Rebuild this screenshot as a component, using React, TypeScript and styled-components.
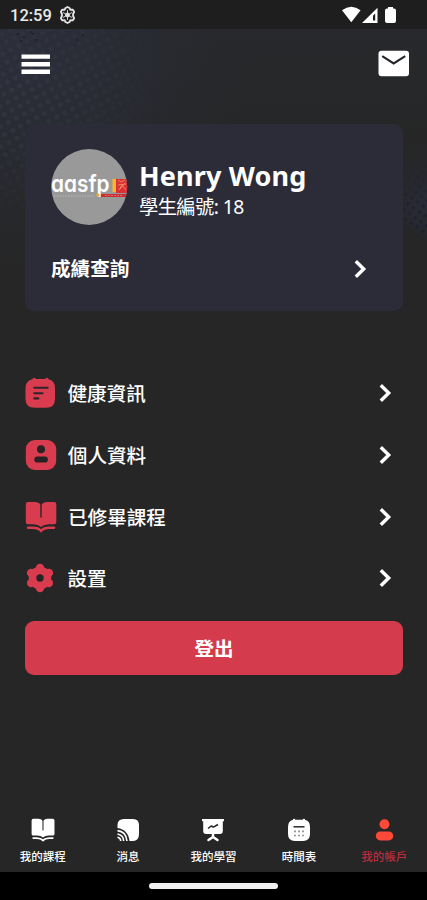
import React from "react";
import styled, { createGlobalStyle } from "styled-components";

const GlobalStyle = createGlobalStyle`
  * { box-sizing: border-box; }
  body { margin: 0; background: #262626; }
  button { border: 0; padding: 0; background: none; color: inherit; font: inherit; }
`;

const Screen = styled.div`
  width: 427px;
  height: 900px;
  display: flex;
  flex-direction: column;
  position: relative;
  isolation: isolate;
  overflow: hidden;
  background: #262626;
  color: #fff;
  font-family: "Noto Sans", "Noto Sans CJK TC", sans-serif;
`;

const Backdrop = styled.svg`
  position: absolute;
  top: 29px;
  left: 0;
  z-index: -1;
`;

const StatusBar = styled.div`
  height: 29px;
  flex: none;
  display: flex;
  align-items: center;
  padding: 0 31px 0 10px;
  background: #1e1e1e;
  font: 500 16.5px/29px Roboto, sans-serif;
  color: #e9e9e9;
`;

const Clock = styled.span`
  width: 49px;
  padding-top: 2px;
`;

const StatusIcons = styled.div`
  margin-left: auto;
  display: flex;
`;

const Header = styled.header`
  height: 95px;
  flex: none;
  display: flex;
  justify-content: space-between;
  align-items: flex-start;
  padding: 20px 17px 0 21px;
`;

const Card = styled.section`
  height: 187px;
  flex: none;
  margin: 0 24px 0 25px;
  padding: 25px 34px 0 26px;
  border-radius: 9px;
  background: #2c2c38;
`;

const Profile = styled.div`
  display: flex;
  gap: 11px;
  height: 96px;
`;

const Identity = styled.div`
  padding-top: 9px;
`;

const Name = styled.h1`
  margin: 0;
  font-size: 27px;
  line-height: 36px;
  font-weight: 700;
  letter-spacing: 0.15px;
  white-space: nowrap;
`;

const StudentNumber = styled.div`
  font-size: 19.3px;
  line-height: 26px;
  letter-spacing: -0.6px;
  white-space: nowrap;
`;

const ResultRow = styled.button`
  width: 100%;
  height: 47px;
  display: flex;
  align-items: center;
  justify-content: space-between;
  font-size: 19.6px;
  line-height: 28px;
  font-weight: 700;
`;

const Menu = styled.nav`
  display: flex;
  flex-direction: column;
  padding: 51.5px 33px 0 25px;
`;

const MenuRow = styled.button`
  height: 61.7px;
  display: flex;
  align-items: center;
  text-align: left;
  font-size: 19.6px;
  line-height: 28px;
  font-weight: 500;
`;

const MenuIcon = styled.span`
  width: 32px;
  height: 32px;
  flex: none;
  color: #d83c4e;
`;

const MenuLabel = styled.span<{ $inset: number }>`
  flex: 1;
  padding: 2px 0 0 ${(p) => p.$inset}px;
`;

const Logout = styled.button`
  height: 54px;
  flex: none;
  margin: 11.7px 24px 0 25px;
  padding-top: 3px;
  border-radius: 9px;
  background: #d43b4c;
  font-size: 19.5px;
  line-height: 28px;
  font-weight: 700;
`;

const TabBar = styled.nav`
  height: 62px;
  flex: none;
  margin-top: auto;
  display: grid;
  grid-template-columns: repeat(5, 1fr);
`;

const Tab = styled.button<{ $active?: boolean }>`
  display: flex;
  flex-direction: column;
  align-items: center;
  padding-top: 8px;
  font-size: 11.5px;
  line-height: 18px;
  font-weight: 500;
  color: ${(p) => (p.$active ? "#b62e3d" : "#fff")};
`;

const TabIcon = styled.span<{ $active?: boolean }>`
  width: 24px;
  height: 24px;
  margin-bottom: 6px;
  color: ${(p) => (p.$active ? "#ff4938" : "#fff")};
`;

const HomeArea = styled.div`
  height: 28px;
  flex: none;
  display: flex;
  justify-content: center;
  padding-top: 11px;
  background: #000;
`;

const HomeHandle = styled.div`
  width: 129px;
  height: 6px;
  border-radius: 3px;
  background: #f1f1f1;
`;

const LogoText = styled.text`
  font: 600 24px Inter, sans-serif;
  font-feature-settings: "cv11";
  fill: #fff;
`;

const Texture = () => (
  <Backdrop width="427" height="260" viewBox="0 29 427 260" aria-hidden="true">
    <defs>
      <radialGradient id="leftGlow" gradientUnits="userSpaceOnUse" cx="20" cy="35" r="250">
        <stop offset="0" stopColor="#2c2e3b" />
        <stop offset="0.45" stopColor="#292b33" />
        <stop offset="1" stopColor="#26282b" stopOpacity="0" />
      </radialGradient>
      <linearGradient id="topShade" x1="0" y1="0" x2="0" y2="1">
        <stop offset="0" stopColor="#27292c" />
        <stop offset="1" stopColor="#262626" />
      </linearGradient>
      <radialGradient id="rightGlow" gradientUnits="userSpaceOnUse" cx="427" cy="205" r="75">
        <stop offset="0" stopColor="#292b38" />
        <stop offset="1" stopColor="#262729" stopOpacity="0" />
      </radialGradient>
      <pattern id="dots" width="9" height="9" patternUnits="userSpaceOnUse" patternTransform="rotate(-28)">
        <circle cx="4" cy="4" r="2.5" fill="#353743" />
      </pattern>
      <pattern id="specks" width="7" height="7" patternUnits="userSpaceOnUse" patternTransform="rotate(35)">
        <circle cx="3" cy="3" r="1.5" fill="#191c2b" />
      </pattern>
      <radialGradient id="leftFade" gradientUnits="userSpaceOnUse" cx="15" cy="85" r="150">
        <stop offset="0" stopColor="#fff" stopOpacity="0.8" />
        <stop offset="1" stopColor="#fff" stopOpacity="0" />
      </radialGradient>
      <radialGradient id="rightFade" gradientUnits="userSpaceOnUse" cx="427" cy="222" r="65">
        <stop offset="0" stopColor="#fff" stopOpacity="0.9" />
        <stop offset="1" stopColor="#fff" stopOpacity="0" />
      </radialGradient>
      <mask id="leftMask"><rect y="29" width="250" height="200" fill="url(#leftFade)" /></mask>
      <mask id="rightMask"><path d="M350 120H427V240L402 219L350 190Z" fill="url(#rightFade)" /></mask>
    </defs>
    <rect y="29" width="427" height="120" fill="url(#topShade)" />
    <rect y="29" width="300" height="260" fill="url(#leftGlow)" />
    <path d="M340 110H427V240L402 220L340 180Z" fill="url(#rightGlow)" />
    <rect y="29" width="250" height="180" fill="url(#dots)" mask="url(#leftMask)" />
    <rect x="350" y="120" width="77" height="125" fill="url(#specks)" mask="url(#rightMask)" />
    <path d="M17 34h2m4 3h2m5-5h2m3 8h2m-17 1h2m10-7h2m48 1h2m-8 5h2" stroke="#1d1f2a" strokeWidth="1.6" />
  </Backdrop>
);

const Chevron = () => (
  <svg width="18" height="24" viewBox="0 0 18 24" fill="none" stroke="#fff" strokeWidth="3.4">
    <path d="M4.8 4.2 12.7 12l-7.900 7.800" />
  </svg>
);

const Book = () => (
  <svg width="100%" height="100%" viewBox="0 0 32 32" fill="currentColor">
    <path d="M.8 3.200Q.8 1 3 1H10q4 0 5.300 2.500V16q0 .8.700.8t.7-.8V3.500Q18 1 22 1h7q2.300 0 2.300 2.200v18q0 2-2.300 2.100h-5.200q-5 0-7.800 2.600-2.800-2.600-7.800-2.600H3Q.8 23.300.8 21.200Z" />
    <path d="M3 26.800h4.700q5.500 0 8.300 3 2.800-3 8.300-3H29" fill="none" stroke="currentColor" strokeWidth="2.500" strokeLinecap="round" />
  </svg>
);

const Note = () => (
  <svg width="100%" height="100%" viewBox="0 0 32 32">
    <path d="M9 .7q1.400 0 1.700 1.200h9.600Q20.700.7 22 .7t1.600 1.500Q30 3.700 30 11v11q0 8.800-9 8.800H10Q.5 30.800.5 22V11Q.5 3.700 7.400 2.200 7.600.7 9 .7Z" fill="currentColor" />
    <path d="M9.300 10.700h13.400M9.300 16.200h8.200M9.300 21.400h4" stroke="#32232a" strokeWidth="2.100" strokeLinecap="round" />
  </svg>
);

const ProfileSquare = () => (
  <svg width="100%" height="100%" viewBox="0 0 32 32">
    <rect x=".8" y="1" width="30.400" height="30" rx="9" fill="currentColor" />
    <circle cx="16" cy="10.300" r="4" fill="#252326" />
    <rect x="9.300" y="17.400" width="13.600" height="6.200" rx="3.100" fill="#252326" />
  </svg>
);

const Gear = () => (
  <svg width="100%" height="100%" viewBox="0 0 32 32">
    <g fill="currentColor">
      <circle cx="15" cy="16" r="11.300" />
      <circle cx="15" cy="6" r="4.200" />
      <circle cx="15" cy="26" r="4.200" />
      <circle cx="6.100" cy="10.900" r="4.200" />
      <circle cx="23.900" cy="10.900" r="4.200" />
      <circle cx="6.100" cy="21.100" r="4.200" />
      <circle cx="23.900" cy="21.100" r="4.200" />
    </g>
    <circle cx="15" cy="16" r="3.700" fill="#262326" />
  </svg>
);

const Feed = () => (
  <svg width="24" height="24" viewBox="0 0 24 24">
    <path d="M1.500 10V7Q1.500 1 8 1h9q6 0 6 6v9q0 7-6 7h-3.500C13 16 8.500 10.800 1.500 10Z" fill="#fff" />
    <path d="M1.500 12.600q8.500.8 9.500 10.400M1.500 16q5.800 1 6.200 7M1.500 19.200q3 .5 3.300 3.800" fill="none" stroke="#fff" strokeWidth="1.600" />
  </svg>
);

const Lesson = () => (
  <svg width="24" height="24" viewBox="0 0 24 24">
    <path d="M1 1h22v2.200h-1.200V13q0 3-3 3H5.200q-3 0-3-3V3.200H1Z" fill="#fff" />
    <path d="M12 15v4m0 0-4.500 3M12 19l4.500 3" stroke="#fff" strokeWidth="2.500" strokeLinecap="round" />
    <path d="m7 10.500 2.500-2q1-.8 2 .1t2.300-.2L17 6.500" fill="none" stroke="#252525" strokeWidth="1.600" />
  </svg>
);

const Schedule = () => (
  <svg width="24" height="24" viewBox="0 0 24 24">
    <path d="M7 .8q1 0 1.300 1h7.400q.3-1 1.300-1t1.300 1.300Q23 3.200 23 9v7q0 7-7 7H8q-7 0-7-7V9q0-5.800 4.700-6.900Q6 .8 7 .8Z" fill="#fff" />
    <path d="M6.500 8.800h11" stroke="#292929" strokeWidth="1.500" />
    <path d="M7 13.300h10M7 17.500h10" stroke="#999" strokeWidth="1.700" strokeDasharray="2 2" />
  </svg>
);

const Person = () => (
  <svg width="24" height="24" viewBox="0 0 24 24" fill="currentColor">
    <circle cx="12.500" cy="6.300" r="5" />
    <rect x="3.800" y="13.400" width="17.500" height="9" rx="4.500" />
  </svg>
);

const Avatar = () => (
  <svg width="77" height="77" viewBox="0 0 77 77" role="img" aria-label="aasfp">
    <defs><clipPath id="avatarClip"><circle cx="38.200" cy="38" r="38" /></clipPath></defs>
    <g clipPath="url(#avatarClip)">
      <rect width="77" height="77" fill="#999" />
      <LogoText x="0" y="42.500" textLength="58.500" lengthAdjust="spacingAndGlyphs">aasfp</LogoText>
      <path d="M61.500 30H65v13h-3.500Z" fill="#ffb52c" />
      <path d="M65 30h12v14H65Z" fill="#da3036" />
      <path d="m67 31 3 2 4-2m-7 5 8-1m-7 6 3-5 4 5m-1-7-5 6" fill="none" stroke="#ee8b64" strokeWidth=".9" />
      <path d="M3 47h40" stroke="#bbb" strokeWidth="1.200" strokeDasharray="1.500 1.300" />
      <path d="M45.500 46h3" stroke="#f5a52c" strokeWidth="2.500" />
      <path d="M50 46.500h27" stroke="#c92d34" strokeWidth="3.200" />
      <path d="M54 46.500h17" stroke="#e77566" strokeWidth=".8" strokeDasharray="2 1" />
    </g>
  </svg>
);

const menuItems = [
  { label: "健康資訊", icon: <Note />, inset: 10.5 },
  { label: "個人資料", icon: <ProfileSquare />, inset: 10.8 },
  { label: "已修畢課程", icon: <Book />, inset: 11 },
  { label: "設置", icon: <Gear />, inset: 10.5 },
];

const tabs = [
  { label: "我的課程", icon: <Book /> },
  { label: "消息", icon: <Feed /> },
  { label: "我的學習", icon: <Lesson /> },
  { label: "時間表", icon: <Schedule /> },
  { label: "我的帳戶", icon: <Person />, active: true },
];

export default function App() {
  return (
    <Screen>
      <GlobalStyle />
      <Texture />
      <StatusBar>
        <Clock>12:59</Clock>
        <svg width="17" height="18" viewBox="0 0 17 18" fill="none" stroke="#e2e2e2">
          <path d="m6.500 2 2-1 2 1 .8 1.700 2.400-.1 1.400 2.200-1 2.200v2l1 2.200-1.400 2.200-2.400-.1-.8 1.700-2 1-2-1-.8-1.700-2.400.1-1.400-2.200 1-2.200V8l-1-2.200 1.400-2.200 2.400.1Z" strokeWidth="1.900" strokeLinejoin="round" />
          <circle cx="8.500" cy="9" r="2" fill="#e2e2e2" strokeWidth="1" />
          <path d="M8.500 4v10M4 6.500l9 5m0-5-9 5" strokeWidth=".9" />
        </svg>
        <StatusIcons>
          <svg width="54" height="18" viewBox="0 0 54 18" fill="#fff">
            <path d="M0 4.200q9.300-7 18.600 0L9.300 16.200Z" />
            <path fillRule="evenodd" d="M20 17 35.500 1.800V17Zm11-2.500h2.200V7.500L31 9.700Z" />
            <path d="M46 1h5v1.500h1q2 0 2 2V15q0 2-2 2h-7q-2 0-2-2V4.500q0-2 2-2h1Z" />
          </svg>
        </StatusIcons>
      </StatusBar>
      <Header>
        <svg width="30" height="30" viewBox="0 0 30 30" stroke="#fff" strokeWidth="4.400">
          <path d="M.5 7.600H29M.5 15.200H29M.5 22.800H29" />
        </svg>
        <svg width="32" height="30" viewBox="0 0 32 30">
          <rect x=".5" y="1.800" width="30.500" height="25.400" rx="3" fill="#fff" />
          <path d="m4.200 7.200 11.500 7.200 11.500-7.200" fill="none" stroke="#242529" strokeWidth="2.100" />
        </svg>
      </Header>
      <Card>
        <Profile>
          <Avatar />
          <Identity>
            <Name>Henry Wong</Name>
            <StudentNumber>學生編號: 18</StudentNumber>
          </Identity>
        </Profile>
        <ResultRow>成績查詢<Chevron /></ResultRow>
      </Card>
      <Menu>
        {menuItems.map((item) => (
          <MenuRow key={item.label}>
            <MenuIcon>{item.icon}</MenuIcon>
            <MenuLabel $inset={item.inset}>{item.label}</MenuLabel>
            <Chevron />
          </MenuRow>
        ))}
      </Menu>
      <Logout>登出</Logout>
      <TabBar>
        {tabs.map((tab) => (
          <Tab key={tab.label} $active={tab.active}>
            <TabIcon $active={tab.active}>{tab.icon}</TabIcon>
            {tab.label}
          </Tab>
        ))}
      </TabBar>
      <HomeArea><HomeHandle /></HomeArea>
    </Screen>
  );
}
